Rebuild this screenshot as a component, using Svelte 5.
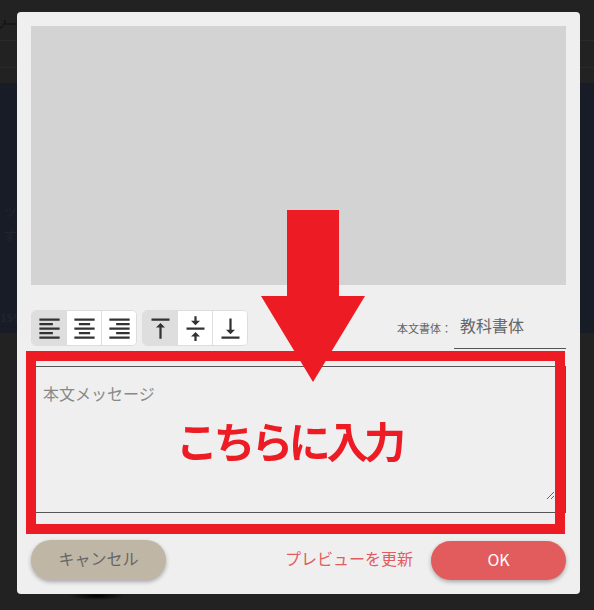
<script>
  let align = $state('left');
  let valign = $state('top');
  let font = $state('教科書体');
  let message = $state('');

  const alignIcons = [
    { id: 'left', d: 'M15 15H3v2h12v-2zm0-8H3v2h12V7zM3 13h18v-2H3v2zm0 8h18v-2H3v2zM3 3v2h18V3H3z' },
    { id: 'center', d: 'M7 15v2h10v-2H7zm-4 6h18v-2H3v2zm0-8h18v-2H3v2zm4-6v2h10V7H7zM3 3v2h18V3H3z' },
    { id: 'right', d: 'M3 21h18v-2H3v2zm6-4h12v-2H9v2zm-6-4h18v-2H3v2zm6-4h12V7H9v2zM3 3v2h18V3H3z' }
  ];
  const valignIcons = [
    { id: 'top', d: 'M8 11h3v10h2V11h3l-4-4-4 4zM4 3v2h16V3H4z' },
    { id: 'middle', d: 'M8 19h3v4h2v-4h3l-4-4-4 4zm8-14h-3V1h-2v4H8l4 4 4-4zM4 11v2h16v-2H4z' },
    { id: 'bottom', d: 'M16 13h-3V3h-2v10H8l4 4 4-4zM4 19v2h16v-2H4z' }
  ];
</script>

<div class="page">
  <div class="backdrop">
    <div class="backdrop-head">
      <svg class="head-curve" width="17" height="12" viewBox="0 0 17 12"><path d="M5 0C5 4 3 7 0 8M5 4h12" /></svg>
    </div>
    <div class="backdrop-navy">
      <span class="faint">ッ</span>
      <span class="faint">す</span>
      <span class="faint num">159</span>
    </div>
    <div class="under-shadow"></div>
  </div>

  <div class="modal">
    <div class="preview"></div>

    <div class="toolbar">
      <div class="btn-group">
        {#each alignIcons as icon}
          <button class="tool" class:active={align === icon.id} onclick={() => (align = icon.id)} aria-label={icon.id}>
            <svg viewBox="0 0 24 24" width="27" height="27"><path d={icon.d} /></svg>
          </button>
        {/each}
      </div>
      <div class="btn-group">
        {#each valignIcons as icon}
          <button class="tool" class:active={valign === icon.id} onclick={() => (valign = icon.id)} aria-label={icon.id}>
            <svg viewBox="0 0 24 24" width="27" height="27"><path d={icon.d} /></svg>
          </button>
        {/each}
      </div>
      <label class="font-label" for="font">本文書体：</label>
      <select id="font" class="font-select" bind:value={font}>
        <option>教科書体</option>
        <option>明朝体</option>
        <option>ゴシック体</option>
      </select>
    </div>

    <div class="message">
      <textarea placeholder="本文メッセージ" bind:value={message}></textarea>
    </div>

    <div class="actions">
      <button class="pill cancel">キャンセル</button>
      <button class="refresh">プレビューを更新</button>
      <button class="pill ok">OK</button>
    </div>
  </div>

  <!-- annotation drawn on top of the dialog -->
  <div class="frame"></div>
  <svg class="arrow" width="104" height="172" viewBox="0 0 104 172">
    <path d="M26 0h52v86h26L52 172 0 86h26z" />
  </svg>
  <div class="callout">こちらに入力</div>
</div>

<style>
  :global(body) {
    margin: 0;
    background: #222;
    font-family: "Noto Sans CJK JP", "Noto Sans", sans-serif;
  }

  .page {
    position: relative;
    width: 594px;
    height: 610px;
    overflow: hidden;
    background: #222;
  }

  .backdrop {
    position: absolute;
    inset: 0;
  }

  .backdrop-head {
    position: relative;
    height: 83px;
    background: linear-gradient(#222 0 40px, #2a2a2a 40px 41px, #222 41px 67px, #2a2a2a 67px 68px, #222 68px);
  }

  .head-curve {
    position: absolute;
    left: 0;
    top: 20px;
    fill: none;
    stroke: #0e0e0e;
  }

  .backdrop-navy {
    height: 250px;
    background: #171c27;
    position: relative;
  }

  .faint {
    position: absolute;
    left: 3px;
    top: 117px;
    font-size: 14px;
    line-height: 20px;
    color: #22252b;
    white-space: nowrap;
  }

  .faint + .faint {
    top: 142px;
  }

  .faint.num {
    left: 0;
    top: 226px;
    font-size: 11px;
    line-height: 16px;
    font-weight: 700;
  }

  .under-shadow {
    position: absolute;
    left: 68px;
    top: 592px;
    width: 58px;
    height: 8px;
    background: radial-gradient(ellipse at center, #000 0, rgba(0, 0, 0, 0) 70%);
  }

  .modal {
    position: absolute;
    left: 17px;
    top: 12px;
    width: 563px;
    height: 582px;
    box-sizing: border-box;
    padding: 14px 14px 0;
    background: #efefef;
    border-radius: 4px;
  }

  .preview {
    height: 259px;
    background: #d3d3d3;
  }

  .toolbar {
    display: flex;
    align-items: flex-start;
    gap: 5px;
    margin-top: 25px;
    height: 38px;
  }

  .btn-group {
    display: flex;
    width: 106px;
    height: 36px;
    box-sizing: border-box;
    border: 1px solid #ddd;
    border-radius: 5px;
    overflow: hidden;
    background: #fff;
  }

  .tool {
    display: flex;
    flex: 1;
    align-items: center;
    justify-content: center;
    padding: 0;
    border: 0;
    border-left: 1px solid #ddd;
    background: #fff;
    cursor: pointer;
  }

  .tool:first-child {
    border-left: 0;
  }

  .tool.active {
    background: #dedede;
  }

  .tool svg {
    fill: #333;
  }

  .font-label {
    margin-left: auto;
    margin-top: 9px;
    font-size: 11px;
    line-height: 18px;
    color: #666;
  }

  .font-select {
    appearance: none;
    width: 112px;
    height: 39px;
    box-sizing: border-box;
    margin-left: -3px;
    padding: 0 6px 8px;
    border: 0;
    border-bottom: 1px solid #555;
    background: transparent;
    font-family: inherit;
    font-size: 16px;
    color: #666;
    outline: none;
  }

  .message {
    margin-top: 18px;
    height: 147px;
    box-sizing: border-box;
    padding: 12px 10px;
    border-top: 1px solid #555;
    border-bottom: 1px solid #555;
    border-right: 1px solid #555;
  }

  textarea {
    display: block;
    width: 100%;
    height: 100%;
    box-sizing: border-box;
    padding: 2px;
    border: 0;
    outline: none;
    background: transparent;
    font-family: inherit;
    font-size: 16px;
    line-height: 24px;
    color: #555;
  }

  textarea::placeholder {
    color: #888;
  }

  .actions {
    display: flex;
    align-items: center;
    margin-top: 27px;
    height: 40px;
  }

  .pill {
    width: 135px;
    height: 40px;
    padding: 0 0 4px;
    border: 0;
    border-radius: 20px;
    font-family: inherit;
    font-size: 16px;
    cursor: pointer;
    box-shadow: 0 2px 4px rgba(0, 0, 0, 0.3);
  }

  .cancel {
    background: #c0b6a5;
    color: #666;
  }

  .ok {
    align-self: flex-end;
    height: 39px;
    background: #e25c5e;
    color: #fff;
  }

  .refresh {
    margin-left: auto;
    margin-right: 18px;
    padding: 0 0 4px;
    border: 0;
    background: none;
    font-family: inherit;
    font-size: 16px;
    color: #e25c5e;
    cursor: pointer;
  }

  .frame {
    position: absolute;
    left: 26px;
    top: 351px;
    width: 539px;
    height: 183px;
    box-sizing: border-box;
    border: 10px solid #ed1c24;
    pointer-events: none;
  }

  .arrow {
    position: absolute;
    left: 261px;
    top: 210px;
    fill: #ed1c24;
    pointer-events: none;
  }

  .callout {
    position: absolute;
    left: 176px;
    top: 410px;
    font-size: 42px;
    line-height: 60px;
    letter-spacing: -4.4px;
    font-weight: 700;
    color: #ed1c24;
    white-space: nowrap;
    filter: blur(0.6px);
    pointer-events: none;
  }
</style>
